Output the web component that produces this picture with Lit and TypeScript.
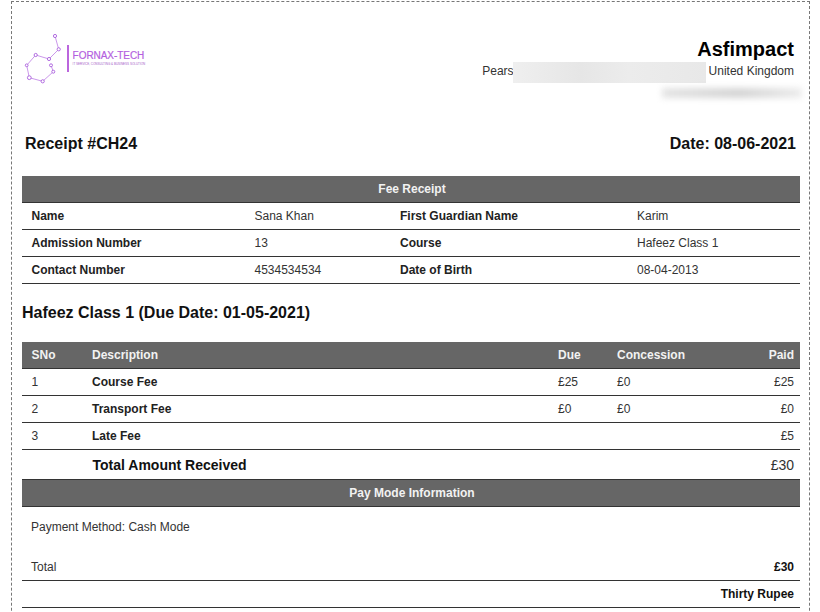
import { LitElement, html, css, svg } from "lit";
import { customElement } from "lit/decorators.js";

const nodes: [number, number, number][] = [
  [55, 36, 1.6], [58.7, 49.3, 1.6], [49, 59, 1.6], [35.7, 55, 1.6], [26.7, 65.3, 1.4],
  [29.3, 77.7, 1.9], [42.7, 81.3, 1.6], [53.3, 71.7, 1.5], [51, 65.3, 1.5],
];

@customElement("app-root")
export class AppRoot extends LitElement {
  static styles = css`
    :host {
      display: block;
      height: 612px;
      overflow: hidden;
      background: #fff;
      font-family: "Liberation Sans", Arial, sans-serif;
      font-size: 12px;
      color: #333;
    }
    .sheet {
      box-sizing: border-box;
      margin: 1px 0 0 11px;
      width: 799px;
      height: 700px;
      border: 1px dashed #777;
      border-bottom: none;
      padding: 0 9px 0 10px;
    }
    .top {
      display: flex;
      justify-content: space-between;
      height: 111px;
    }
    .logo {
      display: flex;
      align-items: flex-start;
      padding-top: 28px;
    }
    .logo svg { display: block; filter: blur(0.3px); }
    .rule {
      width: 1.6px;
      height: 27px;
      margin: 15px 0 0 0;
      background: #bb66dd;
    }
    .brand { display: flex; flex-direction: column; margin: 20px 0 0 4px; width: 72px; }
    .brand b {
      font-size: 10px;
      line-height: 12px;
      font-weight: 400;
      letter-spacing: -0.05px;
      white-space: nowrap;
      width: fit-content;
      color: #b45fe0;
      -webkit-text-stroke: 0.2px #b45fe0;
    }
    .brand small {
      font-size: 3px;
      line-height: 5px;
      color: #a55cc8;
      white-space: nowrap;
    }
    .org {
      position: relative;
      text-align: right;
      padding: 35px 6px 0 0;
      width: 340px;
      box-sizing: border-box;
    }
    .org h1 {
      margin: 0;
      font-size: 20px;
      line-height: 24px;
      color: #000;
      font-weight: 700;
    }
    .address {
      display: flex;
      justify-content: flex-end;
      align-items: center;
      height: 20px;
    }
    .s1 {
      width: 193px;
      height: 21px;
      margin: 2px 3px 0 -1px;
      background: linear-gradient(90deg, #efefef, #e6e6e6 35%, #ececec 60%, #e8e8e8);
    }
    .s2 {
      position: absolute;
      left: 202px;
      top: 86px;
      width: 140px;
      height: 10px;
      background: linear-gradient(90deg, #e4e4e4, #d4d4d4 55%, #ececec);
      filter: blur(3px);
    }
    .meta {
      display: flex;
      justify-content: space-between;
      padding: 21px 4px 0 3px;
      font-size: 16px;
      line-height: 20px;
      font-weight: 700;
      color: #111;
      box-sizing: border-box;
      height: 63px;
    }
    table {
      width: 778px;
      border-collapse: collapse;
      table-layout: fixed;
    }
    th.bar {
      background: #666;
      color: #f2f2f2;
      height: 26px;
      padding: 0 9.5px;
      font-size: 12px;
      font-weight: 700;
      text-align: left;
      border-bottom: 1px solid #333;
    }
    th.mid { text-align: center; padding-left: 11.5px; }
    td {
      height: 26px;
      padding: 0 9.5px;
      border-bottom: 1px solid #333;
      vertical-align: middle;
    }
    th.num, td.num { text-align: right; padding-right: 6px; }
    td.k { font-weight: 700; color: #222; }
    h2 {
      margin: 0;
      height: 58px;
      box-sizing: border-box;
      padding-top: 19px;
      font-size: 16px;
      line-height: 20px;
      color: #111;
      font-weight: 700;
    }
    .total td { height: 29px; }
    .total .big { font-size: 14px; font-weight: 700; color: #111; padding-left: 10px; }
    .total .amt { font-size: 14px; }
    .paymode {
      background: #666;
      color: #f2f2f2;
      font-weight: 700;
      display: flex;
      align-items: center;
      justify-content: center;
      padding-left: 2px;
      box-sizing: border-box;
      height: 27px;
      border-bottom: 1px solid #333;
      width: 778px;
    }
    .method {
      height: 47px;
      padding: 13px 9px 0;
      box-sizing: border-box;
      line-height: 14px;
    }
    .sum {
      width: 778px;
      display: flex;
      justify-content: space-between;
      align-items: center;
      box-sizing: border-box;
      padding: 0 6px 0 9px;
      height: 27px;
      border-bottom: 1px solid #333;
    }
    .sum b { color: #111; }
    .words { justify-content: flex-end; }
  `;

  private logo() {
    return html`<svg width="45" height="55" viewBox="22 30 45 55">
      <path
        d="M55 36 L58.7 49.3 L49 59 L35.7 55 L26.7 65.3 L29.3 77.7 L42.7 81.3 L53.3 71.7 L51 65.3"
        fill="none"
        stroke="#c48be8"
        stroke-width="0.9"
      />
      ${nodes.map(
        ([x, y, r]) => svg`<circle cx=${x} cy=${y} r=${r} fill="#fff" stroke="#a95fdc" stroke-width="0.9"></circle>`
      )}
    </svg>`;
  }

  render() {
    return html`<div class="sheet">
      <div class="top">
        <div class="logo">
          ${this.logo()}
          <div class="rule"></div>
          <div class="brand"><b>FORNAX-TECH</b><small>IT SERVICE, CONSULTING &amp; BUSINESS SOLUTION</small></div>
        </div>
        <div class="org">
          <h1>Asfimpact</h1>
          <div class="address"><span>Pears</span><div class="s1"></div><span>United Kingdom</span></div>
          <div class="s2"></div>
        </div>
      </div>
      <div class="meta"><span>Receipt #CH24</span><span>Date: 08-06-2021</span></div>

      <table>
        <colgroup><col style="width:223px" /><col style="width:145.5px" /><col style="width:237px" /><col /></colgroup>
        <tr><th class="bar mid" colspan="4">Fee Receipt</th></tr>
        <tr><td class="k">Name</td><td>Sana Khan</td><td class="k">First Guardian Name</td><td>Karim</td></tr>
        <tr><td class="k">Admission Number</td><td>13</td><td class="k">Course</td><td>Hafeez Class 1</td></tr>
        <tr><td class="k">Contact Number</td><td>4534534534</td><td class="k">Date of Birth</td><td>08-04-2013</td></tr>
      </table>

      <h2>Hafeez Class 1 (Due Date: 01-05-2021)</h2>

      <table>
        <colgroup><col style="width:60.5px" /><col style="width:466px" /><col style="width:59px" /><col style="width:110px" /><col /></colgroup>
        <tr>
          <th class="bar">SNo</th><th class="bar">Description</th><th class="bar">Due</th><th class="bar">Concession</th><th class="bar num">Paid</th>
        </tr>
        <tr><td>1</td><td class="k">Course Fee</td><td>£25</td><td>£0</td><td class="num">£25</td></tr>
        <tr><td>2</td><td class="k">Transport Fee</td><td>£0</td><td>£0</td><td class="num">£0</td></tr>
        <tr><td>3</td><td class="k">Late Fee</td><td></td><td></td><td class="num">£5</td></tr>
        <tr class="total"><td></td><td class="big" colspan="3">Total Amount Received</td><td class="num amt">£30</td></tr>
      </table>

      <div class="paymode">Pay Mode Information</div>
      <div class="method">Payment Method: Cash Mode</div>
      <div class="sum"><span>Total</span><b>£30</b></div>
      <div class="sum words"><b>Thirty Rupee</b></div>
    </div>`;
  }
}
